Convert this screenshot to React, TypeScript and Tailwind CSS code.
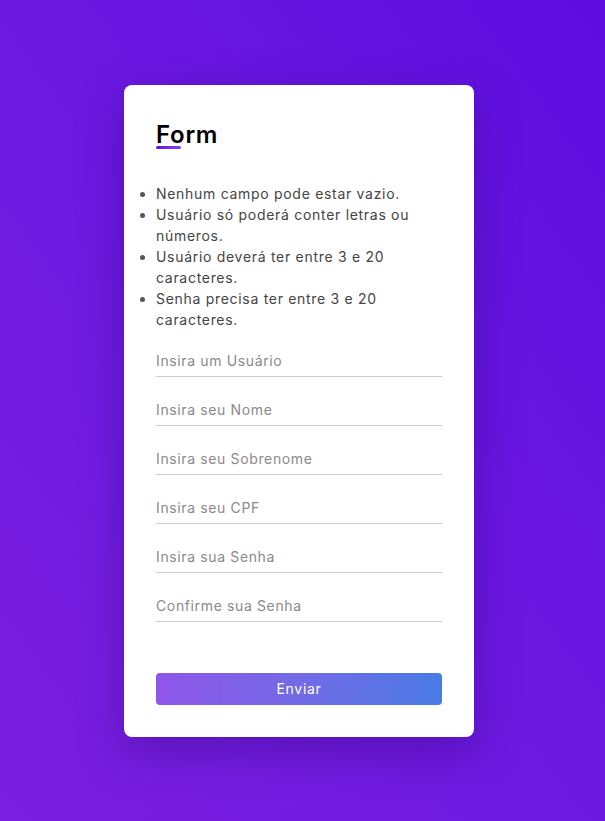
import React from "react";

const fields = [
  "Insira um Usuário",
  "Insira seu Nome",
  "Insira seu Sobrenome",
  "Insira seu CPF",
  "Insira sua Senha",
  "Confirme sua Senha",
];

const rules = [
  "Nenhum campo pode estar vazio.",
  "Usuário só poderá conter letras ou números.",
  "Usuário deverá ter entre 3 e 20 caracteres.",
  "Senha precisa ter entre 3 e 20 caracteres.",
];

export default function App() {
  return (
    <main
      className="flex min-h-screen items-center justify-center bg-linear-to-tr from-[#7b1fe0] to-[#5d0ce0] pr-[7px]"
      style={{ fontFamily: "Inter, 'Noto Sans', sans-serif" }}
    >
      <form className="w-[350px] rounded-lg bg-white px-8 pt-8 pb-8 shadow-[0_15px_45px_rgba(40,0,110,0.35)]">
        <h2 className="relative inline-block text-[24px] leading-[36px] font-semibold tracking-[0.03em] text-black">
          Form
          <span className="absolute bottom-[4px] left-0 h-[3px] w-[25px] rounded-full bg-linear-to-r from-[#5b12e0] to-[#8a3ff0]" />
        </h2>
        <ul className="mt-[30px] list-disc text-[14px] leading-[21px] tracking-[0.05em] text-[#444] marker:text-[#555]">
          {rules.map((r) => (
            <li key={r}>{r}</li>
          ))}
        </ul>
        <div className="mt-[14px] flex flex-col gap-4">
          {fields.map((f) => (
            <input
              key={f}
              type={f.includes("Senha") ? "password" : "text"}
              placeholder={f}
              className="h-[33px] w-full border-b border-[#cccccc] bg-transparent pt-[2px] text-[14px] tracking-[0.045em] text-[#333] outline-none placeholder:text-[#8a8a8a]"
            />
          ))}
        </div>
        <button
          type="button"
          className="mt-[51px] h-8 w-full rounded bg-linear-to-r from-[#8f55e9] to-[#477be4] text-[14px] tracking-[0.05em] text-white"
        >
          Enviar
        </button>
      </form>
    </main>
  );
}
